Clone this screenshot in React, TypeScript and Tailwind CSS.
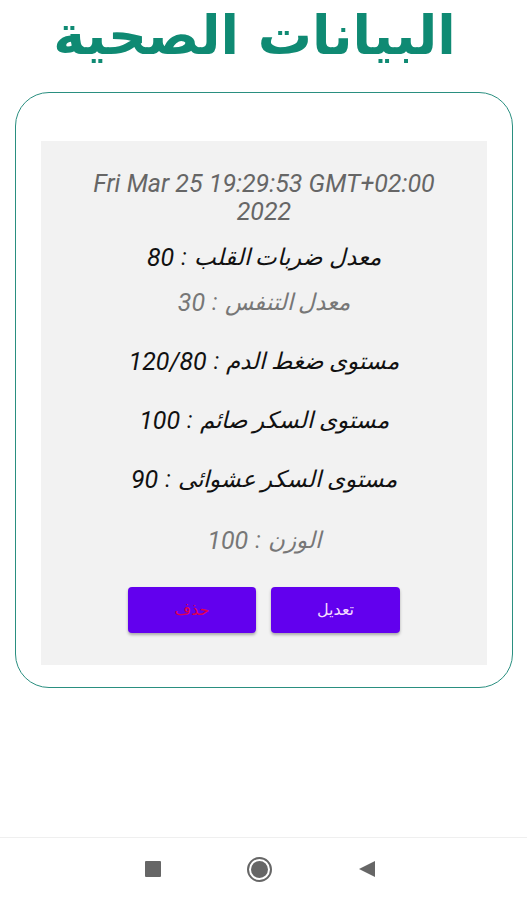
import { useState } from 'react'

// Health data screen: title, a bordered card holding one reading, and the phone nav bar.

type Reading = { label: string; value: string; tone: 'dark' | 'muted'; mt: string }

const READINGS: Reading[] = [
  { label: 'معدل ضربات القلب', value: '80', tone: 'dark', mt: 'mt-[18px]' },
  { label: 'معدل التنفس', value: '30', tone: 'muted', mt: 'mt-[18px]' },
  { label: 'مستوى ضغط الدم', value: '120/80', tone: 'dark', mt: 'mt-[32px]' },
  { label: 'مستوى السكر صائم', value: '100', tone: 'dark', mt: 'mt-[32px]' },
  { label: 'مستوى السكر عشوائى', value: '90', tone: 'dark', mt: 'mt-[32px]' },
  { label: 'الوزن', value: '100', tone: 'muted', mt: 'mt-[34px]' },
]

function NavBar() {
  return (
    <div className="mt-auto h-[63px] border-t border-[#efefef] bg-white flex items-center">
      <div className="w-full flex items-center justify-between pl-[145px] pr-[151px]">
        <div className="w-[16px] h-[16px] bg-[#666] rounded-[1px]" />
        <div className="w-[25px] h-[25px] rounded-full border-2 border-[#666] flex items-center justify-center">
          <div className="w-[17px] h-[17px] rounded-full bg-[#666]" />
        </div>
        <svg width="18" height="18" viewBox="0 0 18 18">
          <path d="M17 1 L1 9 L17 17 Z" fill="#666" />
        </svg>
      </div>
    </div>
  )
}

export default function App() {
  const [reading] = useState(READINGS)

  return (
    <div className="w-[527px] h-[900px] bg-white flex flex-col font-['Roboto','DejaVu_Sans',sans-serif]">
      <h1
        dir="rtl"
        className="text-center text-[54px] leading-[72px] font-bold text-[#0f8a73] font-['DejaVu_Sans',sans-serif] pr-[18px]"
      >
        البيانات الصحية
      </h1>

      {/* Card */}
      <div className="mt-[20px] ml-[15px] mr-[14px] h-[596px] rounded-[34px] border border-[#2a8f80] pt-[48px] px-[25px]">
        <div className="bg-[#f2f2f2] h-[524px] pt-[29px] flex flex-col items-center">
          <p className="text-center italic text-[25px] leading-[28px] text-[#666]">
            Fri Mar 25 19:29:53 GMT+02:00
            <br />
            2022
          </p>
          {reading.map((r) => (
            <p
              key={r.label}
              dir="rtl"
              className={`${r.mt} h-[27px] flex items-center gap-[7px] italic leading-[27px] ${
                r.tone === 'dark' ? 'text-[#111]' : 'text-[#777]'
              }`}
            >
              <span className="text-[23px]">{r.label}</span>
              <span className="text-[23px]">:</span>
              <span className="text-[25px]">{r.value}</span>
            </p>
          ))}
          <div className="mt-[33px] flex gap-[15px]">
            <button className="w-[128px] h-[46px] rounded-[4px] bg-[#6200ee] shadow-[0_2px_3px_rgba(0,0,0,0.3)] text-[16px] text-[#e0004f] font-['DejaVu_Sans',sans-serif]">
              حذف
            </button>
            <button className="w-[129px] h-[46px] rounded-[4px] bg-[#6200ee] shadow-[0_2px_3px_rgba(0,0,0,0.3)] text-[16px] text-[#f4dcff] font-['DejaVu_Sans',sans-serif]">
              تعديل
            </button>
          </div>
        </div>
      </div>

      <NavBar />
    </div>
  )
}
